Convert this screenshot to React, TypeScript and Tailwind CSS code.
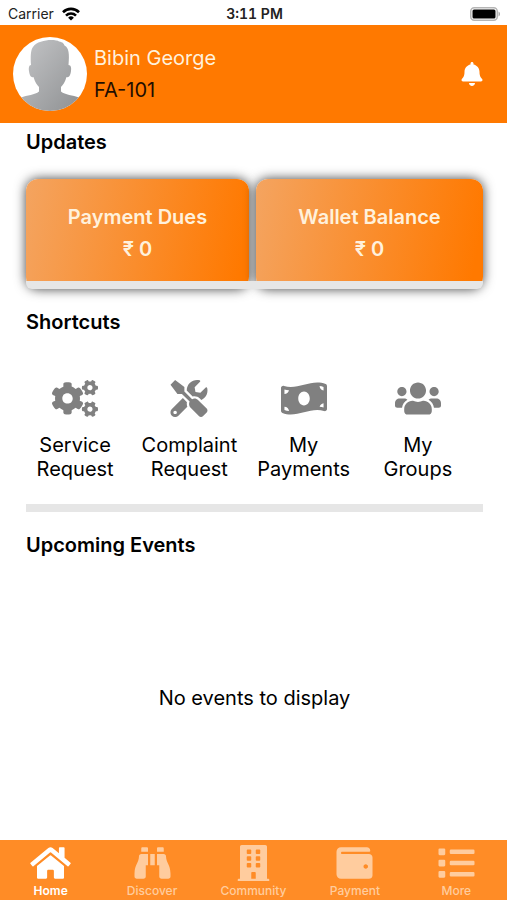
import { FaBell, FaBinoculars, FaBuilding, FaCogs, FaHome, FaList, FaMoneyBillWave, FaTools, FaUsers, FaWallet } from 'react-icons/fa';

const balances = [
  { label: 'Payment Dues', amount: 0 },
  { label: 'Wallet Balance', amount: 0 },
];

const shortcuts = [
  { label: 'Service Request', icon: FaCogs },
  { label: 'Complaint Request', icon: FaTools },
  { label: 'My Payments', icon: FaMoneyBillWave },
  { label: 'My Groups', icon: FaUsers },
];

const tabs = [
  { label: 'Home', icon: FaHome, active: true },
  { label: 'Discover', icon: FaBinoculars, active: false },
  { label: 'Community', icon: FaBuilding, active: false },
  { label: 'Payment', icon: FaWallet, active: false },
  { label: 'More', icon: FaList, active: false },
];

function StatusBar() {
  return (
    <div className="grid h-[25px] grid-cols-3 items-center pl-2 pr-[6px] pt-[2px] text-sm text-[#222]">
      <div className="flex items-center gap-2">
        <span>Carrier</span>
        <svg viewBox="0 0 18 14" className="h-[14px] w-[18px]" fill="none" stroke="#000" strokeWidth="2.6">
          <path d="M1 5.2a11.4 11.4 0 0 1 16 0" />
          <path d="M4 8.6a7.1 7.1 0 0 1 10 0" />
          <path d="M9 13.6 6.1 10.7a4.1 4.1 0 0 1 5.8 0z" fill="#000" stroke="none" />
        </svg>
      </div>
      <span className="text-center font-semibold tabular-nums">3:11 PM</span>
      <svg viewBox="0 0 31 14" className="h-[14px] w-[31px] justify-self-end">
        <rect x="0.75" y="0.75" width="26.5" height="12.5" rx="3.5" fill="#fff" stroke="#b5b5b5" strokeWidth="1.5" />
        <rect x="2.5" y="2.5" width="23" height="9" rx="1.5" fill="#000" />
        <path d="M28.5 4.5c2 .8 2 4.2 0 5z" fill="#aaa" />
      </svg>
    </div>
  );
}

function Avatar() {
  return (
    <svg viewBox="0 0 74 74" className="h-[74px] w-[74px]" role="img" aria-label="Profile photo">
      <defs>
        <linearGradient id="skin" x1="0" y1="0" x2="1" y2="1">
          <stop offset="0" stopColor="#c4c5c7" />
          <stop offset="1" stopColor="#8f9193" />
        </linearGradient>
        <clipPath id="round">
          <circle cx="37" cy="37" r="37" />
        </clipPath>
      </defs>
      <circle cx="37" cy="37" r="37" fill="#fff" />
      <path
        clipPath="url(#round)"
        fill="url(#skin)"
        d="M18 28C17.5 20 17.5 13 20 10C23 5 32 3 38 3C42 3 45 3.5 46 4.5C50 5 51 7 51.5 8.5C56 11 56.5 17 55.5 28C58 28 58.5 31 58 34C57.5 38 56 41 53.5 40C52 45 50 48 48 50V54.5C52 58 60 58 66 60.5V74H8V60.5C14 58 22 58 26 54.5V50C24 48 22 45 20.5 40C18 41 16.5 38 16 34C15.5 31 16 28 18 28Z"
      />
    </svg>
  );
}

export default function App() {
  return (
    <div className="flex min-h-screen flex-col bg-white font-['Inter',sans-serif] text-black">
      <StatusBar />

      <header className="flex h-[98px] items-center bg-[#ff7900] pl-[13px] pr-6">
        <Avatar />
        <div className="ml-[7px] flex-1 text-xl leading-8">
          <p className="text-[#fff1dc]">Bibin George</p>
          <p className="text-[#1f0e00]">FA-101</p>
        </div>
        <button aria-label="Notifications" className="text-white">
          <FaBell className="h-6 w-[22px]" />
        </button>
      </header>

      <main className="flex flex-1 flex-col pl-[26px] pr-6">
        <h2 className="mt-[3px] text-xl font-semibold leading-8">Updates</h2>
        <section className="mt-[21px] grid grid-cols-[223fr_227fr] gap-[7px]">
          {balances.map((item) => (
            <button
              key={item.label}
              className="flex h-[110px] flex-col items-center rounded-xl bg-[linear-gradient(100deg,#f4a460,#ff7900_95%)] pt-[22px] text-xl font-semibold leading-8 text-[#fff1dc] shadow-[0_0_12px_rgba(0,0,0,0.75)]"
            >
              <span>{item.label}</span>
              <span>₹ {item.amount}</span>
            </button>
          ))}
        </section>
        <div className="relative -mt-2 h-2 rounded-b-md bg-[#e6e6e6]" />

        <h2 className="mt-[17px] text-xl font-semibold leading-8">Shortcuts</h2>
        <section className="-ml-2 mr-2 mt-[42px] grid grid-cols-4">
          {shortcuts.map(({ label, icon: Icon }) => (
            <button key={label} className="flex flex-col items-center gap-4 text-xl leading-6">
              <Icon className="h-[37px] w-[46px] text-[#808080]" />
              <span className="w-min">{label}</span>
            </button>
          ))}
        </section>
        <div className="mt-[23px] h-2 bg-[#e6e6e6]" />

        <h2 className="mt-[17px] text-xl font-semibold leading-8">Upcoming Events</h2>
        <p className="flex flex-1 items-center justify-center pb-[6px] text-xl">No events to display</p>
      </main>

      <nav className="grid h-[60px] grid-cols-5 bg-[#ff8c26]">
        {tabs.map(({ label, icon: Icon, active }) => (
          <a
            key={label}
            href={`#${label.toLowerCase()}`}
            className={`flex flex-col items-center gap-[2px] pt-[5px] text-xs ${active ? 'font-semibold text-white' : 'font-medium text-[#ffcc9e]'}`}
          >
            <Icon className="h-9 w-[41px]" />
            <span>{label}</span>
          </a>
        ))}
      </nav>
    </div>
  );
}
